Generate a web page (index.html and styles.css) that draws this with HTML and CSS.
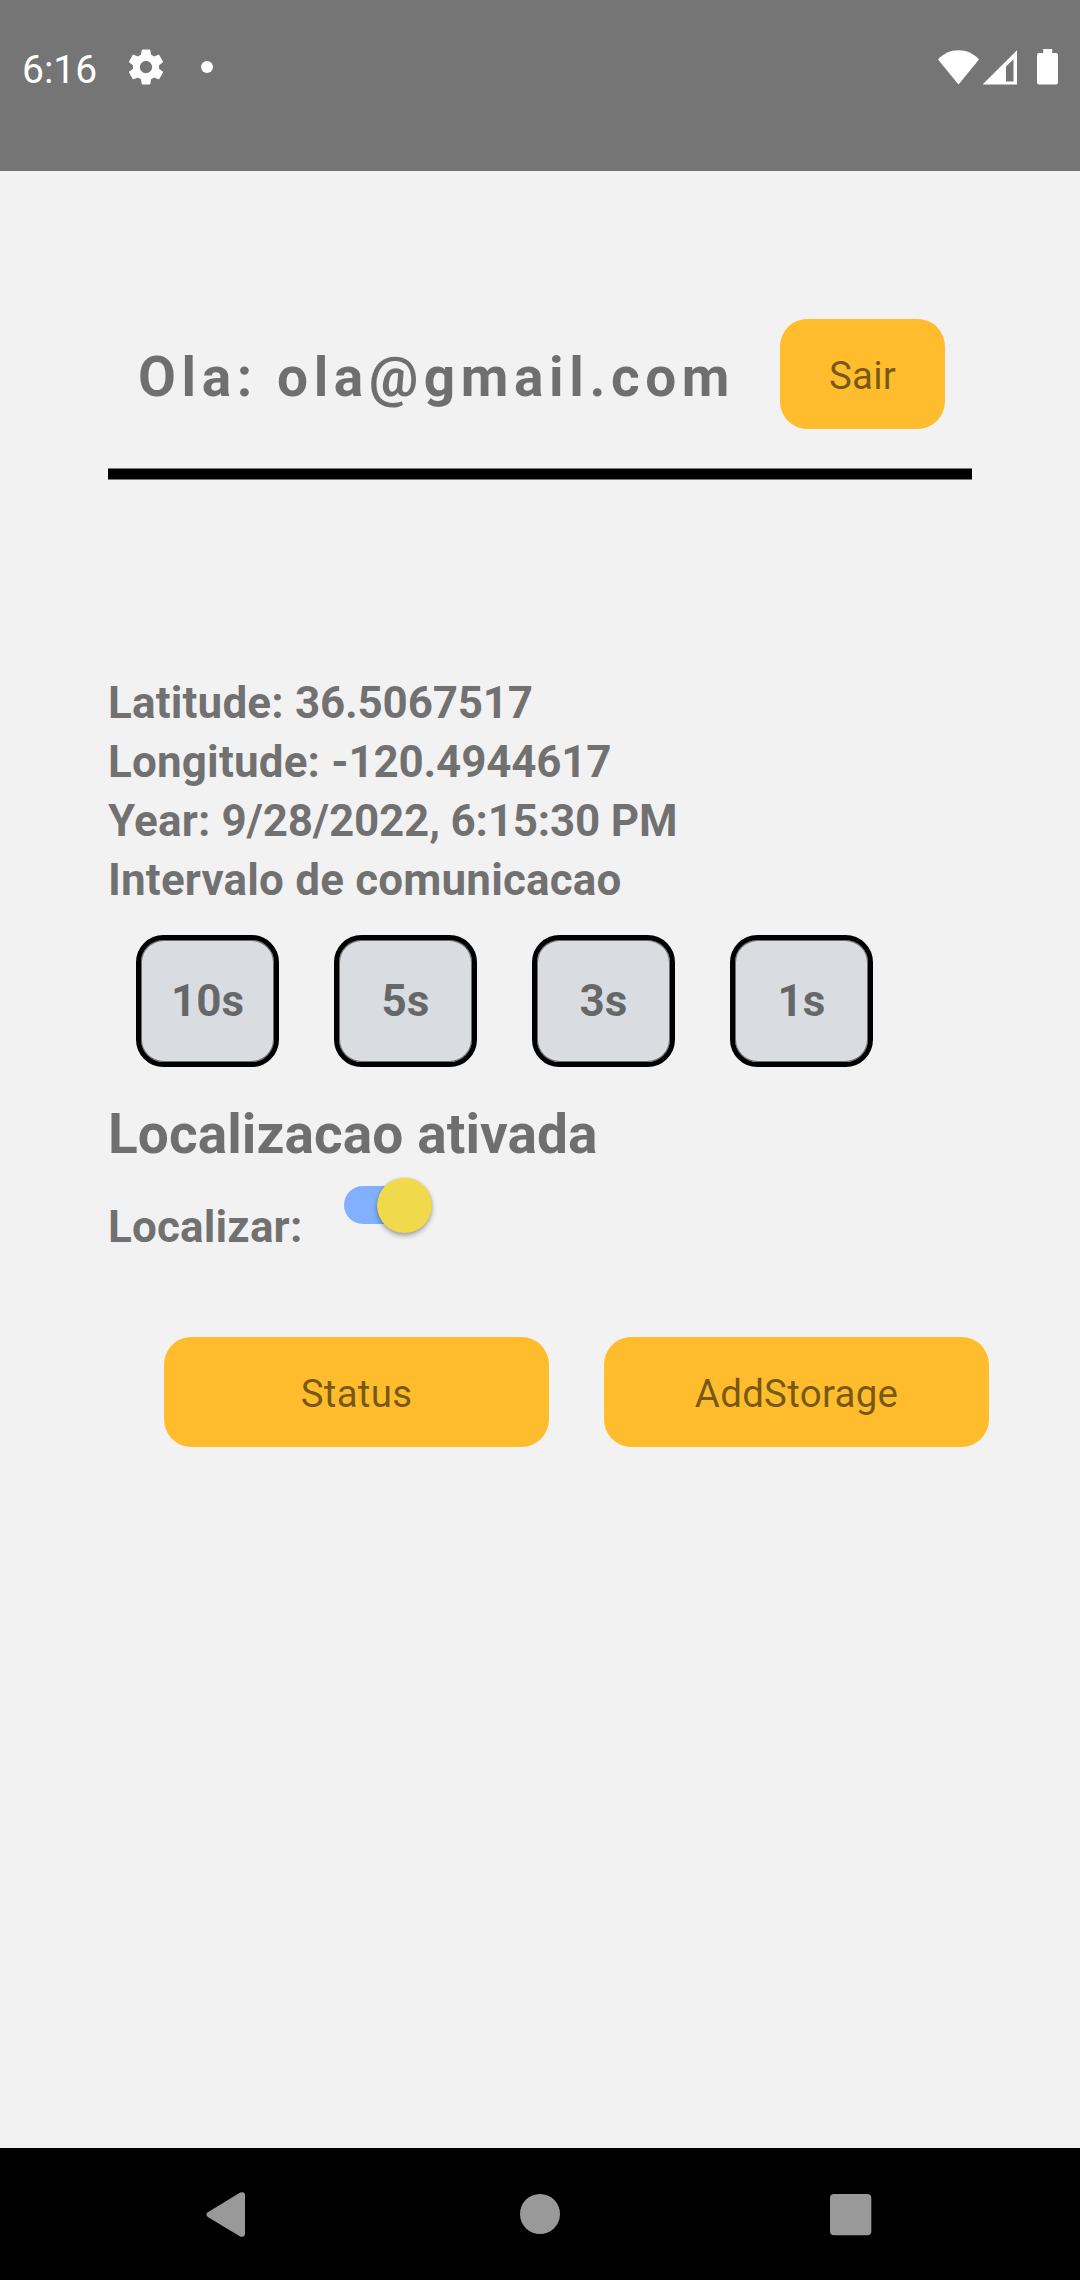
FILE: index.html
```html
<!DOCTYPE html>
<html lang="pt">
<head>
<meta charset="utf-8">
<title>Localizacao</title>
<link rel="stylesheet" href="styles.css">
</head>
<body>
<div class="screen">
  <div class="status-bar">
    <span class="clock">6:16</span>
    <svg class="gear" width="42" height="42" viewBox="0 0 24 24"><path d="M19.43 12.98c.04-.32.07-.64.07-.98s-.03-.66-.07-.98l2.11-1.65c.19-.15.24-.42.12-.64l-2-3.46c-.12-.22-.39-.3-.61-.22l-2.49 1c-.52-.4-1.08-.73-1.69-.98l-.38-2.65C14.46 2.18 14.25 2 14 2h-4c-.25 0-.46.18-.49.42l-.38 2.65c-.61.25-1.17.59-1.69.98l-2.49-1c-.23-.09-.49 0-.61.22l-2 3.46c-.13.22-.07.49.12.64l2.11 1.65c-.04.32-.07.65-.07.98s.03.66.07.98l-2.11 1.65c-.19.15-.24.42-.12.64l2 3.46c.12.22.39.3.61.22l2.49-1c.52.4 1.08.73 1.69.98l.38 2.65c.03.24.24.42.49.42h4c.25 0 .46-.18.49-.42l.38-2.65c.61-.25 1.17-.59 1.69-.98l2.49 1c.23.09.49 0 .61-.22l2-3.46c.12-.22.07-.49-.12-.64l-2.11-1.65zM12 15.5c-1.93 0-3.5-1.57-3.5-3.5s1.57-3.5 3.5-3.5 3.5 1.57 3.5 3.5-1.57 3.5-3.5 3.5z"/></svg>
    <span class="dot"></span>
    <svg class="signals" width="122" height="38" viewBox="0 0 122 38">
      <path d="M0 11.5C5.5 5.5 12.5 2.3 20.5 2.3S35.5 5.5 41 11.5L20.5 36.5z"/>
      <path fill-rule="evenodd" d="M44.5 36.5L79 2.3V36.5zM68 33.5H75.5V11.2L68 18.5z"/>
      <path d="M105.2 1h9v4h3.8a2 2 0 0 1 2 2v27.5a2 2 0 0 1-2 2h-17a2 2 0 0 1-2-2V7a2 2 0 0 1 2-2h4.200z"/>
    </svg>
  </div>

  <main class="content">
    <header class="greeting">
      <h1 class="user">Ola: ola@gmail.com</h1>
      <button class="btn btn-exit">Sair</button>
    </header>
    <div class="divider"></div>

    <section class="info">
      <p>Latitude: <span class="value">36.5067517</span></p>
      <p>Longitude: <span class="value">-120.4944617</span></p>
      <p>Year: <span class="value">9/28/2022, 6:15:30 PM</span></p>
      <p>Intervalo de comunicacao</p>
    </section>

    <div class="intervals">
      <button class="interval">10s</button>
      <button class="interval">5s</button>
      <button class="interval">3s</button>
      <button class="interval">1s</button>
    </div>

    <h2 class="state">Localizacao ativada</h2>
    <div class="locate">
      <span class="locate-label">Localizar:</span>
      <span class="switch" role="switch" aria-checked="true"><span class="thumb"></span></span>
    </div>

    <div class="actions">
      <button class="btn">Status</button>
      <button class="btn">AddStorage</button>
    </div>
  </main>

  <nav class="nav-bar">
    <svg width="1080" height="132" viewBox="0 0 1080 132">
      <path d="M207.8 64.2L240.2 44.6Q245 43 245 47.5V85.5Q245 90 240.2 88.4L207.8 68.9Q205 66.5 207.8 64.2z"/>
      <circle cx="540" cy="66" r="20"/>
      <rect x="830" y="46" width="41.3" height="41.3" rx="4"/>
    </svg>
  </nav>
</div>
</body>
</html>
```
FILE: styles.css
```css
* {
  box-sizing: border-box;
  margin: 0;
  padding: 0;
}

body {
  font-family: Roboto, "Liberation Sans", sans-serif;
  color: rgba(0, 0, 0, 0.54);
  background: #f2f2f2;
}

.screen {
  display: flex;
  flex-direction: column;
  width: 1080px;
  height: 2280px;
  overflow: hidden;
}

.status-bar {
  display: flex;
  align-items: flex-start;
  height: 171px;
  padding: 46px 20px 0 22px;
  background: #757575;
  color: #fff;
  fill: #fff;
}

.clock {
  width: 103px;
  font-size: 39px;
  line-height: 46px;
  padding-top: 1px;
}

.dot {
  width: 12px;
  height: 12px;
  margin: 15px 0 0 34px;
  border-radius: 50%;
  background: #fff;
}

.signals {
  margin: 2px 0 0 auto;
}

.content {
  flex: 1;
  padding: 148px 91px 0 108px;
}

.greeting {
  display: flex;
  justify-content: space-between;
  align-items: center;
  width: 837px;
  height: 110px;
  padding-left: 30px;
}

.user {
  font-size: 55px;
  line-height: 64px;
  padding-top: 6px;
  letter-spacing: 5.6px;
  white-space: nowrap;
}

.btn {
  flex: 1;
  height: 110px;
  border: 0;
  border-radius: 27.5px;
  background: #ffbd2e;
  color: rgba(0, 0, 0, 0.54);
  font: 38.5px/46px Roboto, "Liberation Sans", sans-serif;
  letter-spacing: 0.25px;
  padding-top: 3px;
}

.btn-exit {
  flex: 0 0 165px;
  padding-top: 4px;
}

.divider {
  width: 864px;
  height: 12px;
  margin-top: 39px;
  border: solid #797979;
  border-width: 1px 0;
  background: #000;
}

.info {
  margin-top: 194px;
  font-size: 44px;
  font-weight: 700;
  line-height: 59px;
  letter-spacing: 0.16px;
}

.value {
  letter-spacing: -0.2px;
}

.intervals {
  display: flex;
  gap: 55px;
  margin: 25px 0 0 28px;
}

.interval {
  width: 143px;
  height: 132px;
  border: 5px solid #000;
  border-radius: 27.5px;
  background: #d9dce1;
  box-shadow: inset 0 0 0 1px #6c6e70;
  color: rgba(0, 0, 0, 0.54);
  font: 700 44px/52px Roboto, "Liberation Sans", sans-serif;
}

.state {
  margin-top: 35px;
  font-size: 55px;
  line-height: 64px;
  letter-spacing: 0.08px;
}

.locate {
  display: flex;
  height: 93px;
}

.locate-label {
  width: 236px;
  padding-top: 35px;
  font-size: 44px;
  font-weight: 700;
  line-height: 52px;
  letter-spacing: 0.16px;
}

.switch {
  display: flex;
  justify-content: flex-end;
  align-items: center;
  width: 88px;
  height: 38px;
  margin-top: 20px;
  border-radius: 19px;
  background: linear-gradient(#82b0ff, #82b0ff) left / 66px 100% no-repeat;
}

.thumb {
  width: 55px;
  height: 55px;
  flex: none;
  border-radius: 50%;
  background: #f0d94a;
  box-shadow: 0 3px 5px rgba(0, 0, 0, 0.3), 0 0 3px rgba(0, 0, 0, 0.12);
}

.actions {
  display: flex;
  gap: 55px;
  margin-top: 78px;
  padding-left: 56px;
  width: 881px;
}

.nav-bar {
  height: 132px;
  background: #000;
  fill: #999;
}

.nav-bar svg {
  display: block;
}
```
